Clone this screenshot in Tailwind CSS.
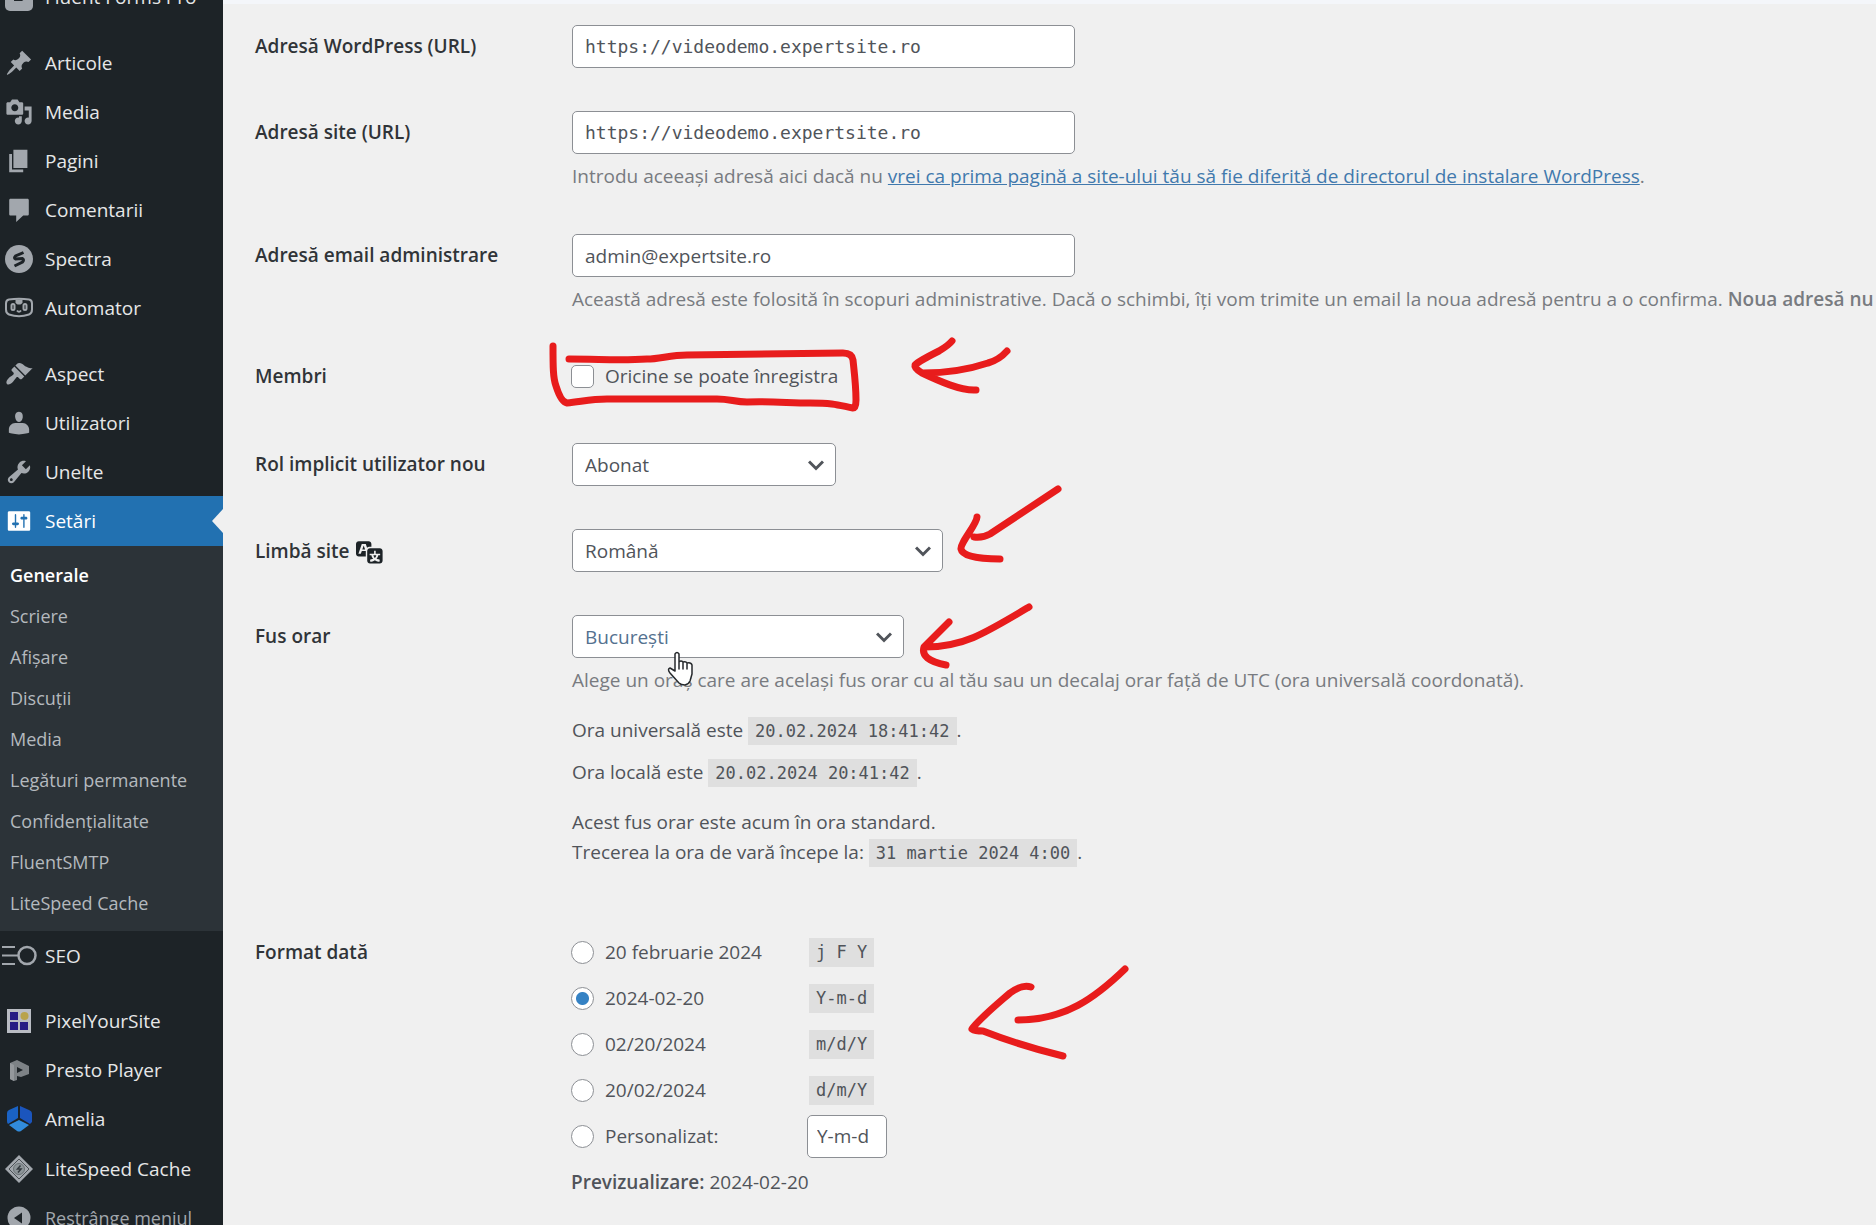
<!DOCTYPE html>
<html lang="ro">
	<head>
		<meta charset="UTF-8" />
		<meta name="viewport" content="width=device-width, initial-scale=1.0" />
		<title>Setări generale</title>
		<script src="https://cdn.jsdelivr.net/npm/@tailwindcss/browser@4"></script>
	</head>
	<body class="relative flex h-screen overflow-hidden bg-[#f0f0f0] font-['Open_Sans','Noto_Sans',sans-serif] text-[19px] leading-[30px] text-[#50545a]">
		<!-- Admin menu -->
		<nav class="w-[223px] shrink-0 overflow-hidden bg-[#1d2327] text-[#e6e7e8]">
			<ul class="-mt-7">
				<li>
					<a href="#" class="flex h-[49px] items-center gap-3 pl-[5px] whitespace-nowrap">
						<svg class="size-7 shrink-0 text-[#a2a7ad]" viewBox="0 0 28 28" fill="currentColor"><rect y="0" width="28" height="28" rx="5" /><path d="M9 18h8l4-3H12q-3 0-3 3zM9 12h12l2-4H13q-4 0-4 4z" fill="#1d2327" /></svg>
						Fluent Forms Pro
					</a>
				</li>
				<li class="mt-[17px]">
					<a href="#" class="flex h-[49px] items-center gap-3 pl-[5px]">
						<svg class="size-7 shrink-0 text-[#a2a7ad]" viewBox="0 0 20 20" fill="currentColor"><path d="M10.44 3.02l1.82-1.82 6.36 6.35-1.83 1.82c-1.05-.68-2.48-.57-3.41.36l-.75.75c-.92.93-1.04 2.35-.35 3.41l-1.83 1.82-2.41-2.41-2.8 2.79c-.42.42-3.38 2.71-3.8 2.29s1.86-3.39 2.28-3.81l2.79-2.79L4.1 9.36l1.83-1.82c1.05.69 2.48.57 3.4-.36l.75-.75c.93-.92 1.05-2.35.36-3.41z" /></svg>
						Articole
					</a>
				</li>
				<li>
					<a href="#" class="flex h-[49px] items-center gap-3 pl-[5px]">
						<svg class="size-7 shrink-0 text-[#a2a7ad]" viewBox="0 0 20 20" fill="currentColor"><path d="M13 11V4c0-.55-.45-1-1-1h-1.67L9 1H5L3.67 3H2c-.55 0-1 .45-1 1v7c0 .55.45 1 1 1h10c.55 0 1-.45 1-1zM7 4.5c1.38 0 2.5 1.12 2.5 2.5S8.38 9.5 7 9.5 4.5 8.38 4.5 7 5.62 4.5 7 4.5zM14 6h5v10.5c0 1.38-1.12 2.5-2.5 2.5S14 17.88 14 16.5s1.12-2.5 2.5-2.5c.17 0 .34.02.5.05V9h-3V6zm-4 8.05V13h2v3.5c0 1.38-1.12 2.5-2.5 2.5S7 17.88 7 16.5 8.12 14 9.5 14c.17 0 .34.02.5.05z" /></svg>
						Media
					</a>
				</li>
				<li>
					<a href="#" class="flex h-[49px] items-center gap-3 pl-[5px]">
						<svg class="size-7 shrink-0 text-[#a2a7ad]" viewBox="0 0 20 20" fill="currentColor"><path d="M6 15V2h10v13H6zm-1 1h8v2H3V5h2v11z" /></svg>
						Pagini
					</a>
				</li>
				<li>
					<a href="#" class="flex h-[49px] items-center gap-3 pl-[5px]">
						<svg class="size-7 shrink-0 text-[#a2a7ad]" viewBox="0 0 20 20" fill="currentColor"><path d="M4 2h12c.6 0 1 .4 1 1v10c0 .6-.4 1-1 1h-3l-5 4.500V14H4c-.6 0-1-.4-1-1V3c0-.6.4-1 1-1z" /></svg>
						Comentarii
					</a>
				</li>
				<li>
					<a href="#" class="flex h-[49px] items-center gap-3 pl-[5px]">
						<svg class="size-7 shrink-0 text-[#a2a7ad]" viewBox="0 0 28 28"><circle cx="14" cy="14" r="14" fill="currentColor" /><path d="M18.500 7.500L10.500 11q-2 2 0 3l7-.500q2 1 0 3.500l-8 4" fill="none" stroke="#1d2327" stroke-width="3" /></svg>
						Spectra
					</a>
				</li>
				<li>
					<a href="#" class="flex h-[49px] items-center gap-3 pl-[5px]">
						<svg class="size-7 shrink-0 text-[#a2a7ad]" viewBox="0 0 28 28" fill="none" stroke="currentColor" stroke-width="2"><path d="M4 5.500q10-1.500 20 0 3 .5 3 4v6q0 4-3 5-10 3.500-20 0-3-1-3-5v-6q0-3.500 3-4z" /><rect x="6.500" y="10" width="3" height="6" rx="1.500" /><rect x="18.500" y="10" width="3" height="6" rx="1.500" /><path d="M10.500 5.500h7v3.500l-2 1.500h-3l-2-1.500z" fill="currentColor" stroke="none" /><path d="M12 16.500q2 2.500 4 0" /></svg>
						Automator
					</a>
				</li>
				<li class="mt-[17px]">
					<a href="#" class="flex h-[49px] items-center gap-3 pl-[5px]">
						<svg class="size-7 shrink-0 text-[#a2a7ad]" viewBox="0 0 20 20" fill="currentColor"><path d="M14.480 11.060L7.410 3.990l1.500-1.500c.5-.56 2.300-.47 3.510.32 1.210.8 1.430 1.280 2.910 2.100 1.180.64 2.450 1.260 4.450.85zm-.71.71L6.700 4.700 4.930 6.470c-.39.39-.39 1.020 0 1.410l1.060 1.060c.39.39.39 1.030 0 1.420-.6.6-1.430 1.110-2.210 1.690-.35.26-.7.53-1.010.84C1.430 14.230.4 16.080 1.400 17.070c.99 1 2.840-.03 4.180-1.360.31-.31.58-.66.85-1.020.57-.78 1.080-1.610 1.690-2.210.39-.39 1.020-.39 1.410 0l1.060 1.060c.39.39 1.020.39 1.410 0z" /></svg>
						Aspect
					</a>
				</li>
				<li>
					<a href="#" class="flex h-[49px] items-center gap-3 pl-[5px]">
						<svg class="size-7 shrink-0 text-[#a2a7ad]" viewBox="0 0 20 20" fill="currentColor"><path d="M10 9.250c-2.270 0-2.730-3.440-2.730-3.440C7 4.020 7.820 2 9.970 2c2.160 0 2.980 2.020 2.710 3.810 0 0-.41 3.440-2.680 3.440zM7.280 10h5.440c2.390 0 4.520 2.330 4.520 4.530v2.490s-3.650 1.130-7.240 1.130c-3.650 0-7.240-1.130-7.240-1.130v-2.490c0-2.250 1.940-4.530 4.520-4.530z" /></svg>
						Utilizatori
					</a>
				</li>
				<li>
					<a href="#" class="flex h-[49px] items-center gap-3 pl-[5px]">
						<svg class="size-7 shrink-0 text-[#a2a7ad]" viewBox="0 0 20 20" fill="currentColor"><path d="M16.680 9.770c-1.340 1.340-3.300 1.670-4.950.99l-5.410 6.520c-.99.99-2.590.99-3.580 0s-.99-2.590 0-3.570l6.520-5.420c-.68-1.650-.35-3.610.99-4.950 1.280-1.280 3.120-1.620 4.720-1.060l-2.890 2.890 2.820 2.820 2.860-2.870c.53 1.580.18 3.390-1.080 4.650zM3.810 16.210c.4.39 1.040.39 1.430 0 .4-.4.4-1.040 0-1.430-.39-.4-1.030-.4-1.430 0-.39.39-.39 1.030 0 1.430z" /></svg>
						Unelte
					</a>
				</li>
				<li>
					<a href="#" class="relative flex h-[50px] items-center gap-3 bg-[#2271b1] pl-[5px] text-white">
						<svg class="size-7 shrink-0" viewBox="0 0 20 20" fill="currentColor"><path d="M18 16V4c0-.55-.45-1-1-1H3c-.55 0-1 .45-1 1v12c0 .55.45 1 1 1h14c.55 0 1-.45 1-1zM8 11h1c.55 0 1 .45 1 1s-.45 1-1 1H8v1.500c0 .28-.22.5-.5.5s-.5-.22-.5-.5V13H6c-.55 0-1-.45-1-1s.45-1 1-1h1V5.500c0-.28.22-.5.5-.5s.5.22.5.5V11zm5-2h-1c-.55 0-1-.45-1-1s.45-1 1-1h1V5.500c0-.28.22-.5.5-.5s.5.22.5.5V7h1c.55 0 1 .45 1 1s-.45 1-1 1h-1v5.500c0 .28-.22.5-.5.5s-.5-.22-.5-.5V9z" /></svg>
						Setări
						<svg class="absolute top-[13px] right-0 h-6 w-[11px]" viewBox="0 0 11 24"><path d="M11 0v24L0 12z" fill="#f0f0f0" /></svg>
					</a>
					<ul class="flex flex-col gap-px bg-[#2c3338] pt-[9px] pb-2 pl-[10px] text-[18px] text-[#b4b9be]">
						<li class="flex h-10 items-center font-semibold text-white"><a href="#">Generale</a></li>
						<li class="flex h-10 items-center"><a href="#">Scriere</a></li>
						<li class="flex h-10 items-center"><a href="#">Afișare</a></li>
						<li class="flex h-10 items-center"><a href="#">Discuții</a></li>
						<li class="flex h-10 items-center"><a href="#">Media</a></li>
						<li class="flex h-10 items-center"><a href="#">Legături permanente</a></li>
						<li class="flex h-10 items-center"><a href="#">Confidențialitate</a></li>
						<li class="flex h-10 items-center"><a href="#">FluentSMTP</a></li>
						<li class="flex h-10 items-center"><a href="#">LiteSpeed Cache</a></li>
					</ul>
				</li>
				<li>
					<a href="#" class="flex h-[49px] items-center gap-2 pl-px">
						<svg class="h-7 w-9 shrink-0 text-[#a2a7ad]" viewBox="0 0 36 28" fill="none" stroke="currentColor" stroke-width="2"><path d="M1 5h13M1 13.500h16M1 22h13" /><circle cx="26" cy="13.500" r="8.500" stroke-width="2.500" /></svg>
						SEO
					</a>
				</li>
				<li class="mt-4">
					<a href="#" class="flex h-[49px] items-center gap-3 pl-[5px]">
						<svg class="size-7 shrink-0" viewBox="0 0 28 28"><path fill="#b9bcc3" d="M2 2h24v24H2z" /><path fill="#261b84" d="M5 5h8v8H5zM5 15h8v8H5zM15 15h8v8h-8z" /><circle cx="19.500" cy="9" r="4" fill="#b9a34b" /></svg>
						PixelYourSite
					</a>
				</li>
				<li>
					<a href="#" class="flex h-[49px] items-center gap-3 pl-[5px]">
						<svg class="size-7 shrink-0" viewBox="0 0 28 28"><path fill="#7d8286" d="M5 7l7-3 12 6v8l-8 3-4-1v4l-3 1-4-2z" /><path fill="#94989c" d="M5 7l4 2v16l-4-2z" /><path fill="#1d2327" d="M12 11l6 3-6 3z" /></svg>
						Presto Player
					</a>
				</li>
				<li>
					<a href="#" class="flex h-[50px] items-center gap-3 pl-[5px]">
						<svg class="size-7 shrink-0" viewBox="0 0 28 28"><path fill="#1a62c4" d="M13 1v12L3 19q-1-1-1-3V8q0-2 2-3z" /><path fill="#1b55bd" d="M15 1l9 4q3 1 3 4v8l-2 2-10-6z" /><path fill="#318bdc" d="M14 15l10 5-8 6q-2 1-4 0l-8-6z" /></svg>
						Amelia
					</a>
				</li>
				<li>
					<a href="#" class="flex h-[49px] items-center gap-3 pl-[5px]">
						<svg class="size-7 shrink-0" viewBox="0 0 28 28"><path fill="#a2a7ad" d="M14 0l14 14-14 14L0 14z" /><path fill="#a2a7ad" stroke="#4a5055" stroke-width="1" d="M14 4l10 10-10 10L4 14z" /><circle cx="14" cy="14" r="5.500" fill="#8d9599" stroke="#6b7276" /><path d="M15.500 10.500l-3 3.500h3.500l-3 3.500" fill="none" stroke="#343a3f" stroke-width="1.500" /></svg>
						LiteSpeed Cache
					</a>
				</li>
				<li>
					<button type="button" class="flex h-[49px] items-center gap-3 pl-[5px] text-[18px] text-[#a2a7ad]">
						<svg class="size-7 shrink-0" viewBox="0 0 28 28"><circle cx="14" cy="14" r="11.500" fill="currentColor" /><path d="M17 8.500v11L9 14z" fill="#1d2327" /></svg>
						Restrânge meniul
					</button>
				</li>
			</ul>
		</nav>

		<!-- General settings form -->
		<main class="min-w-0 flex-1 overflow-hidden border-t-4 border-[#f4f6fa] pl-8">
			<form class="flex flex-col gap-[43px] pt-[21px]">
				<div class="flex">
					<label for="siteurl" class="w-[317px] shrink-0 py-[6px] font-semibold text-[#303438]">Adresă WordPress (URL)</label>
					<input id="siteurl" type="text" value="https://videodemo.expertsite.ro" class="block h-[43px] w-[503px] rounded-[5px] border border-[#8c8f94] bg-white px-3 font-['DejaVu_Sans_Mono',monospace] text-[18px]" />
				</div>

				<div class="flex">
					<label for="home" class="w-[317px] shrink-0 py-[6px] font-semibold text-[#303438]">Adresă site (URL)</label>
					<div>
						<input id="home" type="text" value="https://videodemo.expertsite.ro" class="block h-[43px] w-[503px] rounded-[5px] border border-[#8c8f94] bg-white px-3 font-['DejaVu_Sans_Mono',monospace] text-[18px]" />
						<p class="mt-[7px] whitespace-nowrap text-[#787b80]">Introdu aceeași adresă aici dacă nu <a href="#" class="text-[#4179ad] underline">vrei ca prima pagină a site-ului tău să fie diferită de directorul de instalare WordPress</a>.</p>
					</div>
				</div>

				<div class="flex">
					<label for="admin-email" class="w-[317px] shrink-0 py-[6px] font-semibold text-[#303438]">Adresă email administrare</label>
					<div>
						<input id="admin-email" type="email" value="admin@expertsite.ro" class="block h-[43px] w-[503px] rounded-[5px] border border-[#8c8f94] bg-white px-3" />
						<p class="mt-[7px] whitespace-nowrap text-[#787b80]">Această adresă este folosită în scopuri administrative. Dacă o schimbi, îți vom trimite un email la noua adresă pentru a o confirma. <strong class="font-semibold">Noua adresă nu va deveni activă până când nu este confirmată.</strong></p>
					</div>
				</div>

				<div class="flex h-[43px]">
					<span class="w-[316px] shrink-0 py-1 font-semibold text-[#303438]">Membri</span>
					<label class="flex h-[38px] items-center gap-[11px]">
						<input type="checkbox" class="size-[23px] appearance-none rounded-[5px] border border-[#8c8f94] bg-white" />
						Oricine se poate înregistra
					</label>
				</div>

				<div class="flex">
					<label for="role" class="w-[317px] shrink-0 py-[6px] font-semibold text-[#303438]">Rol implicit utilizator nou</label>
					<div class="relative">
						<select id="role" class="block h-[43px] w-[264px] appearance-none rounded-[5px] border border-[#8c8f94] bg-white px-3">
							<option>Abonat</option>
						</select>
						<svg class="pointer-events-none absolute top-[17px] right-3 h-[11px] w-4" viewBox="0 0 16 11" fill="none" stroke="#50545a" stroke-width="3"><path d="M1 1.500l7 7 7-7" /></svg>
					</div>
				</div>

				<div class="flex">
					<label for="locale" class="flex h-[43px] w-[317px] shrink-0 items-center gap-[6px] font-semibold text-[#303438]">
						Limbă site
						<svg class="size-7" viewBox="0 0 20 20" fill="#1d2327"><path d="M11 7H9.490c-.63 0-1.250.3-1.590.7L7 5H4.130l-2.390 7h1.690l.74-2H7v4H2c-1.100 0-2-.9-2-2V5c0-1.100.9-2 2-2h7c1.100 0 2 .9 2 2v2zM6.510 9H4.490l1-2.930zM10 8h7c1.100 0 2 .9 2 2v7c0 1.100-.9 2-2 2h-7c-1.100 0-2-.9-2-2v-7c0-1.100.9-2 2-2zm7.250 5v-1.080h-3.170V9.750h-1.160v2.170H9.750V13h1.280c.11.85.56 1.850 1.280 2.620-.87.36-1.890.62-2.310.62-.01.02.22.97.2 1.460.84 0 2.210-.5 3.280-1.150 1.090.65 2.480 1.150 3.340 1.150-.02-.49.2-1.440.2-1.460-.43 0-1.490-.27-2.380-.63.7-.77 1.140-1.770 1.250-2.610h1.360zm-3.810 1.930c-.5-.46-.85-1.130-1.010-1.930h2.090c-.17.8-.51 1.470-1 1.930l-.04.03s-.03-.02-.04-.03z" /></svg>
					</label>
					<div class="relative">
						<select id="locale" class="block h-[43px] w-[371px] appearance-none rounded-[5px] border border-[#8c8f94] bg-white px-3">
							<option>Română</option>
						</select>
						<svg class="pointer-events-none absolute top-[17px] right-3 h-[11px] w-4" viewBox="0 0 16 11" fill="none" stroke="#50545a" stroke-width="3"><path d="M1 1.500l7 7 7-7" /></svg>
					</div>
				</div>

				<div class="flex">
					<label for="timezone" class="w-[317px] shrink-0 py-[6px] font-semibold text-[#303438]">Fus orar</label>
					<div class="pb-[26px]">
						<div class="relative w-[332px]">
							<select id="timezone" class="block h-[43px] w-full appearance-none rounded-[5px] border border-[#8c8f94] bg-white px-3 text-[#54718f]">
								<option>București</option>
							</select>
							<svg class="pointer-events-none absolute top-[17px] right-3 h-[11px] w-4" viewBox="0 0 16 11" fill="none" stroke="#50545a" stroke-width="3"><path d="M1 1.500l7 7 7-7" /></svg>
						</div>
						<p class="mt-[7px] text-[#787b80]">Alege un oraș care are același fus orar cu al tău sau un decalaj orar față de UTC (ora universală coordonată).</p>
						<p class="mt-5">Ora universală este <code class="bg-[#dfdfdf] px-[7px] py-1 font-['DejaVu_Sans_Mono',monospace] text-[17px] leading-none">20.02.2024 18:41:42</code>.</p>
						<p class="mt-3">Ora locală este <code class="bg-[#dfdfdf] px-[7px] py-1 font-['DejaVu_Sans_Mono',monospace] text-[17px] leading-none">20.02.2024 20:41:42</code>.</p>
						<p class="mt-5">Acest fus orar este acum în ora standard.<br />Trecerea la ora de vară începe la: <code class="bg-[#dfdfdf] px-[7px] py-1 font-['DejaVu_Sans_Mono',monospace] text-[17px] leading-none">31 martie 2024 4:00</code>.</p>
					</div>
				</div>

				<fieldset class="-mt-[7px] flex">
					<legend class="float-left w-[316px] shrink-0 py-2 font-semibold text-[#303438]">Format dată</legend>
					<div>
						<div class="flex h-[46px] items-center">
							<label class="flex w-[238px] items-center gap-[11px]"><input type="radio" name="date" class="size-[23px] appearance-none rounded-full border border-[#8c8f94] bg-white checked:bg-[radial-gradient(circle,#3582c4_0_6px,#fff_7px)]" />20 februarie 2024</label>
							<code class="bg-[#dfdfdf] px-[7px] font-['DejaVu_Sans_Mono',monospace] text-[17px] leading-[29px]">j F Y</code>
						</div>
						<div class="flex h-[46px] items-center">
							<label class="flex w-[238px] items-center gap-[11px]"><input type="radio" name="date" checked class="size-[23px] appearance-none rounded-full border border-[#8c8f94] bg-white checked:bg-[radial-gradient(circle,#3582c4_0_6px,#fff_7px)]" />2024-02-20</label>
							<code class="bg-[#dfdfdf] px-[7px] font-['DejaVu_Sans_Mono',monospace] text-[17px] leading-[29px]">Y-m-d</code>
						</div>
						<div class="flex h-[46px] items-center">
							<label class="flex w-[238px] items-center gap-[11px]"><input type="radio" name="date" class="size-[23px] appearance-none rounded-full border border-[#8c8f94] bg-white checked:bg-[radial-gradient(circle,#3582c4_0_6px,#fff_7px)]" />02/20/2024</label>
							<code class="bg-[#dfdfdf] px-[7px] font-['DejaVu_Sans_Mono',monospace] text-[17px] leading-[29px]">m/d/Y</code>
						</div>
						<div class="flex h-[46px] items-center">
							<label class="flex w-[238px] items-center gap-[11px]"><input type="radio" name="date" class="size-[23px] appearance-none rounded-full border border-[#8c8f94] bg-white checked:bg-[radial-gradient(circle,#3582c4_0_6px,#fff_7px)]" />20/02/2024</label>
							<code class="bg-[#dfdfdf] px-[7px] font-['DejaVu_Sans_Mono',monospace] text-[17px] leading-[29px]">d/m/Y</code>
						</div>
						<div class="flex h-[46px] items-center">
							<label class="flex w-[236px] items-center gap-[11px]"><input type="radio" name="date" class="size-[23px] appearance-none rounded-full border border-[#8c8f94] bg-white checked:bg-[radial-gradient(circle,#3582c4_0_6px,#fff_7px)]" />Personalizat:</label>
							<input type="text" value="Y-m-d" aria-label="Format personalizat" class="h-[43px] w-20 rounded-[5px] border border-[#8c8f94] bg-white px-[9px]" />
						</div>
						<p class="mt-2"><strong class="font-semibold">Previzualizare:</strong> 2024-02-20</p>
					</div>
				</fieldset>
			</form>
		</main>

		<!-- Marker strokes and mouse pointer -->
		<svg class="pointer-events-none absolute top-0 left-0" width="1876" height="1225" viewBox="0 0 1876 1225" fill="none" stroke="#e81c1c" stroke-width="7" stroke-linecap="round" stroke-linejoin="round">
			<path d="M553 346C553 366 553 378 556 386Q561 402 567 403C580 402 590 399 607 399H717C730 399 735 402 747 402C770 401 790 403 810 403C835 403 838 405 853 408Q856 408 856 400C856 385 854 370 853 360Q852 353 843 353L687 355C670 355 660 359 647 359C620 361 600 359 569 359" />
			<path d="M952 341Q949 345 939 351C929 356 919 361 915 365Q914 368 922 373C939 381 961 391 976 390M1007 351Q999 360 988 363C967 370 949 373 923 373" />
			<path d="M977 517C977 524 960 543 961 549Q963 559 1000 559M974 537Q983 538 990 534L1058 489" />
			<path d="M949 622L924 647Q920 660 946 665M1029 607C984 634 963 647 925 647" />
			<path d="M1031 987Q1022 984 1010 993C995 1006 978 1020 972 1029Q975 1031 983 1031C1006 1040 1030 1048 1063 1056M1125 969C1095 998 1065 1020 1018 1020" />
			<path d="M675 654q2-3 4 0v8q2-2 4 0 3-1 4 1 4-1 5 2v9l-2 7q-1 3-5 4-4 0-6-2l-9-10q-3-4 0-5l5 3zM679 662v7M683 662v7M687 663v6" fill="#fff" stroke="#26292c" stroke-width="1.500" />
		</svg>
	</body>
</html>
